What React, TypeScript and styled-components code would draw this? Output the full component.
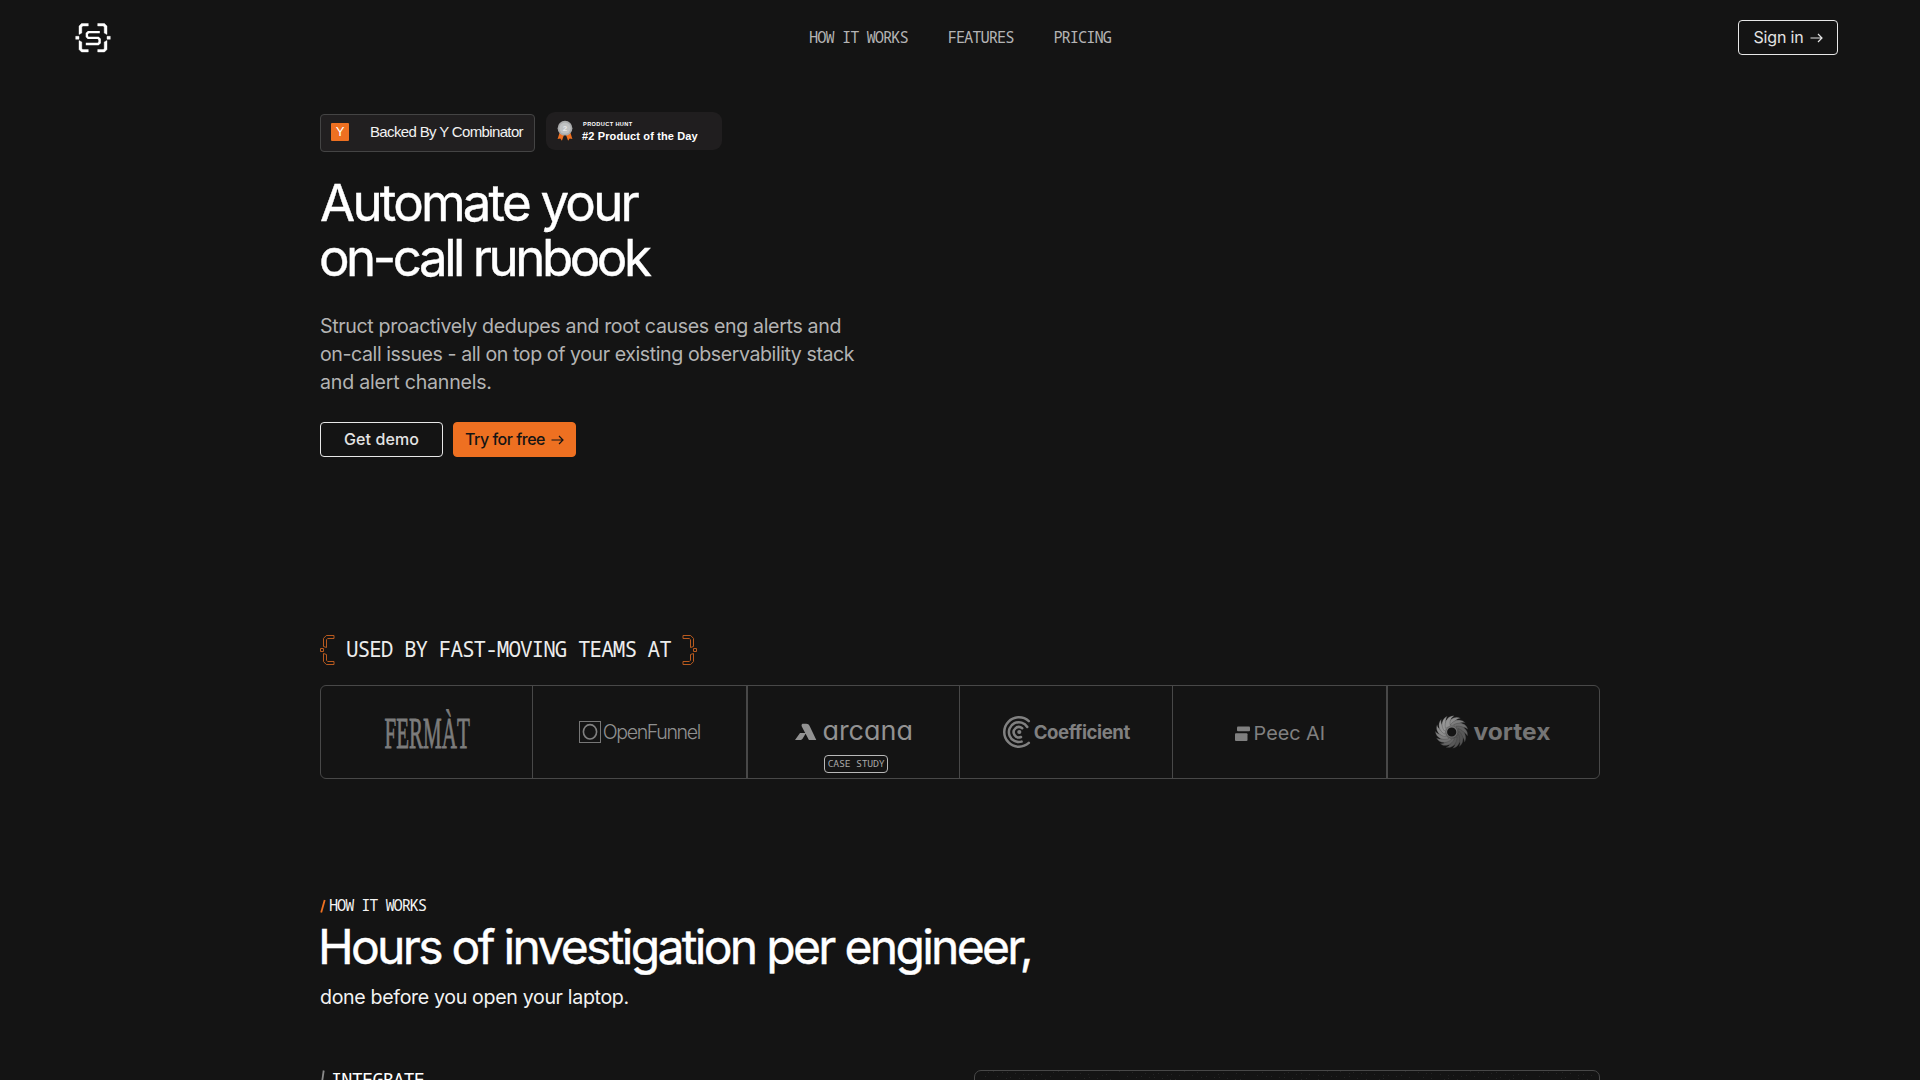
import React from 'react';
import styled, { createGlobalStyle } from 'styled-components';

const mono = '"Noto Sans Mono", "DejaVu Sans Mono", monospace';
const display = 'Inter, "Liberation Sans", sans-serif';

const GlobalStyle = createGlobalStyle`
  * { box-sizing: border-box; }
  body { margin: 0; background: #141414; color: #fff; overflow: hidden; }
  h1, h2, h3, p { margin: 0; font-weight: 400; }
  svg { display: block; flex: none; }
  a { color: inherit; text-decoration: none; }
`;

const Page = styled.div`
  height: 1080px;
  overflow: hidden;
  background: #141414;
`;

const Header = styled.header`
  display: grid;
  grid-template-columns: 1fr auto 1fr;
  align-items: center;
  height: 75px;
  padding: 0 82px 0 75px;
`;

const Nav = styled.nav`
  display: flex;
  gap: 40px;
  padding-left: 7px;
  font: 400 15.4px/20px ${mono};
  letter-spacing: -1.02px;
  color: #b4b4b4;
`;

const Button = styled.button<{ $variant?: 'outline' | 'primary'; $width: number; $weight?: number; $spacing?: number }>`
  display: flex;
  align-items: center;
  justify-content: center;
  gap: 6px;
  width: ${p => p.$width}px;
  height: 35px;
  padding: 0;
  border: 1px solid ${p => (p.$variant === 'primary' ? '#ee7021' : '#e8e8e8')};
  border-radius: 4px;
  background: ${p => (p.$variant === 'primary' ? '#ee7021' : 'transparent')};
  color: ${p => (p.$variant === 'primary' ? '#141414' : '#e4e4e4')};
  font: ${p => p.$weight ?? 500} 16px/33px ${display};
  letter-spacing: ${p => p.$spacing ?? 0}px;
`;

const SignInSlot = styled.div`
  justify-self: end;
`;

const Container = styled.main`
  width: 1280px;
  margin: 0 auto;
`;

const Badges = styled.div`
  display: flex;
  gap: 11px;
  padding-top: 37px;
`;

const YcBadge = styled.div`
  display: flex;
  align-items: center;
  gap: 21px;
  width: 215px;
  height: 38px;
  margin-top: 2px;
  padding: 0 0 2px 10px;
  border: 1px solid #444;
  border-radius: 4px;
  background: #211f20;
  font: 400 15px/20px "Liberation Sans", Arial, sans-serif;
  letter-spacing: -0.64px;
  white-space: nowrap;
  color: #f2f2f2;
`;

const YMark = styled.span`
  width: 18px;
  height: 18px;
  border-radius: 1px;
  background: #ee7021;
  color: #fff;
  font: 400 13px/18px "Liberation Sans", Arial, sans-serif;
  letter-spacing: 0;
  text-align: center;
`;

const HuntBadge = styled.div`
  display: flex;
  gap: 9px;
  width: 176px;
  height: 38px;
  padding: 8px 0 0 11px;
  border-radius: 9px;
  background: #201e1f;
  font-family: "Liberation Sans", Arial, sans-serif;
  font-weight: 700;
  white-space: nowrap;
`;

const HuntLabel = styled.div`
  padding: 1px 0 0 1px;
  font-size: 5.6px;
  line-height: 6px;
  letter-spacing: 0.4px;
`;

const HuntTitle = styled.div`
  margin-top: 2px;
  font-size: 11px;
  line-height: 14px;
  letter-spacing: 0.13px;
`;

const HeroTitle = styled.h1`
  padding-top: 23px;
  font: 400 51px/55px ${display};
  -webkit-text-stroke: 0.4px #fff;
`;

const Line = styled.span<{ $spacing: number; $shift?: number }>`
  display: block;
  margin-left: ${p => p.$shift ?? 0}px;
  letter-spacing: ${p => p.$spacing}px;
  white-space: nowrap;
`;

const Lead = styled.p`
  padding-top: 27px;
  font: 400 19.6px/28px ${display};
  color: #b3b3b3;
`;

const Actions = styled.div`
  display: flex;
  gap: 10px;
  padding-top: 26px;
`;

const UsedBy = styled.div`
  display: flex;
  gap: 11px;
  height: 30px;
  margin-top: 178px;
  font: 400 21px/28px ${mono};
  letter-spacing: -1px;
  color: #ececec;
`;

const Logos = styled.div`
  display: grid;
  grid-template-columns: 212px 215px 212px 213px 215px 211px;
  height: 94px;
  margin-top: 20px;
  border: 1px solid #484848;
  border-radius: 6px;
`;

const Cell = styled.div<{ $divider: number }>`
  border-right: ${p => p.$divider}px solid #484848;
  display: flex;
  flex-direction: column;
  align-items: center;
`;

const CaseStudy = styled.a`
  width: 64px;
  height: 18px;
  margin: -23px 0 0 5px;
  border: 1px solid #b8b8b8;
  border-radius: 4px;
  font: 400 9.8px/15px ${mono};
  letter-spacing: -0.22px;
  text-align: center;
  white-space: nowrap;
  color: #a8a8a8;
`;

const Eyebrow = styled.div`
  display: flex;
  gap: 3px;
  margin-top: 117px;
  font: 400 15.4px/20px ${mono};
  letter-spacing: -1.16px;
  color: #f4f4f4;
`;

const SectionTitle = styled.h2`
  padding-top: 3px;
  font: 400 48px/56px ${display};
  -webkit-text-stroke: 0.4px #fff;
`;

const SectionLead = styled.p`
  padding-top: 8px;
  font: 400 19.6px/28px ${display};
  color: #f2f2f2;
`;

const Steps = styled.div`
  display: grid;
  grid-template-columns: 1fr 626px;
  margin-top: 59px;
`;

const StepTitle = styled.h3`
  display: flex;
  gap: 6px;
  font: 400 18.6px/18px ${mono};
  letter-spacing: -0.8px;
`;

const Panel = styled.div`
  height: 200px;
  border: 1px solid #484848;
  border-radius: 7px;
  overflow: hidden;
`;

const Arrow = () => (
  <svg width="13" height="11" viewBox="0 0 13 11" fill="none" stroke="currentColor" strokeWidth="1.2">
    <path d="M.5 6H12M8 2L12 6L8 10" />
  </svg>
);

const StructLogo = () => (
  <svg width="36" height="32" viewBox="0 0 36 32" fill="#fff">
    <g stroke="#fff" strokeWidth=".4">
      <path d="M13.3 1.5H6.5L4 4v8.5L6.8 11V5l1-1h5.5zM.7 14.3H4v3H.7zM4 18.5L6.8 20v6.5l1 1h5.5V30H6.5L4 27.5z" />
      <path d="M22.7 1.5h6.8L32 4v8.5L29.2 11V5l-1-1h-5.5zM35.3 14.3H32v3h3.3zM32 18.5L29.2 20v6.5l-1 1h-5.5V30h6.8l2.5-2.5z" />
    </g>
    <path d="M24.8 10.1H13.4L11.9 11.6v3l1.3 1.3h10l1.4 1.4v3.4L23.2 22H10.8" fill="none" stroke="#fff" strokeWidth="2.4" />
  </svg>
);

const Brace = ({ flip }: { flip?: boolean }) => (
  <svg width="15" height="31" viewBox="0 0 15 31" fill="none" stroke="#b85a1f" strokeWidth="1">
    <g transform={flip ? 'translate(15 0) scale(-1 1)' : undefined}>
      <path d="M14 .5H6.3L3.5 3.4V11.5L6.5 12.5V4.7L7.7 3.5H14zM14 29.5H6.3L3.5 26.6V18.5L6.5 19.5V25.3L7.7 26.5H14zM.5 13.5h3v3h-3z" />
    </g>
  </svg>
);

const Medal = () => (
  <svg width="16" height="22" viewBox="0 0 16 22">
    <path d="M2.5 13L.6 19l2.7-.5 1.6 2.3L7 15zM13.5 13l1.9 6-2.7-.5-1.6 2.3L9 15z" fill="#ee7021" />
    <circle cx="8" cy="8.2" r="7.4" fill="#a9aaab" />
    <circle cx="8" cy="8.2" r="5.6" fill="#bfc1c2" />
    <text x="8" y="11" fontSize="8" fontFamily="Liberation Sans" fontWeight="700" fill="#e9eaeb" textAnchor="middle">2</text>
  </svg>
);

type WordProps = {
  x: number; y: number; size: number; width: number;
  weight?: number; fill?: string; family?: string; tight?: boolean; outline?: number; children: string;
};
const Word = ({ x, y, size, width, weight = 400, fill = '#808080', family = 'Inter', tight, outline = 0, children }: WordProps) => (
  <text
    x={x} y={y} textLength={width} lengthAdjust={tight ? 'spacing' : 'spacingAndGlyphs'}
    fontFamily={`${family}, sans-serif`} fontSize={size} fontWeight={weight} fill={fill}
    stroke={fill} strokeWidth={outline}
    style={{ fontFeatureSettings: children === 'arcana' ? '"cv11" 1' : 'normal' }}
  >
    {children}
  </text>
);

const Fermat = () => (
  <svg width="212" height="92" viewBox="321 686 212 92">
    <Word x={384.6} y={748} size={43.5} width={85.2} outline={0.9} fill="#7c7c7c" family="Liberation Serif">FERMÀT</Word>
  </svg>
);

const OpenFunnel = () => (
  <svg width="213" height="92" viewBox="533 686 213 92">
    <rect x="579.5" y="721.5" width="21" height="21" fill="none" stroke="#777" />
    <ellipse cx="590" cy="731.8" rx="6.6" ry="7.2" fill="none" stroke="#808080" strokeWidth="1.6" />
    <Word x={602.8} y={738.5} size={19.6} width={98.5} weight={300} fill="#909090" tight>OpenFunnel</Word>
  </svg>
);

const Arcana = () => (
  <svg width="211" height="92" viewBox="748 686 211 92" fill="#929292">
    <path d="M802.5 723.8h3.8c1.7 0 2.6.8 3.2 2L816.3 740h-7.4l-7-13.2c-.6-1.5-.4-2.4.6-3zM800 733h6l-3 5c-.8 1.4-1.5 2-3 2h-5z" />
    <Word x={822.4} y={740} size={26} width={90.5} fill="#929292">arcana</Word>
  </svg>
);

const Coefficient = () => (
  <svg width="212" height="92" viewBox="960 686 212 92">
    <g fill="none" stroke="#808080" strokeWidth="2.5" strokeLinecap="round">
      <path d="M1028.8 721.1A14.7 14.7 0 1 0 1028.8 742.9" />
      <path d="M1027.3 727A9.9 9.9 0 1 0 1021.6 741.6" />
      <path d="M1022.2 728.2A5.2 5.2 0 1 0 1021 737" />
    </g>
    <circle cx="1019.3" cy="732" r="2.1" fill="#808080" />
    <Word x={1033.8} y={738.7} size={18.6} width={96.4} weight={700} tight>Coefficient</Word>
  </svg>
);

const Peec = () => (
  <svg width="213" height="92" viewBox="1173 686 213 92" fill="#808080">
    <rect x="1237" y="726.5" width="13" height="4.8" rx="1" />
    <rect x="1235" y="733.3" width="12.5" height="7.7" rx="1" />
    <Word x={1253.6} y={740.3} size={19} width={71.5}>Peec AI</Word>
  </svg>
);

const blades = Array.from({ length: 15 }, (_, i) => i * 24);
const Vortex = () => (
  <svg width="211" height="92" viewBox="1388 686 211 92">
    <defs>
      <linearGradient id="swirl" gradientUnits="userSpaceOnUse" x1="1440" y1="718" x2="1463" y2="746">
        <stop offset="0" stopColor="#9a9a9a" />
        <stop offset="1" stopColor="#4a4a4a" />
      </linearGradient>
    </defs>
    <circle cx="1451.7" cy="732" r="8.8" fill="none" stroke="url(#swirl)" strokeWidth="8.4" />
    {blades.map(a => (
      <path
        key={a}
        d="M1447.5 726C1449 719 1455 715.5 1460.5 718.2C1456.5 718.8 1453.5 721.5 1453 726z"
        transform={`rotate(${a} 1451.7 732)`}
        fill={`rgb(${[0, 1, 2].map(() => Math.round(116 + 34 * Math.cos(((a + 50) * Math.PI) / 180))).join(',')})`}
        stroke="#333" strokeWidth=".25"
      />
    ))}
    <Word x={1473.5} y={739.5} size={24} width={77} weight={700} fill="#757575">vortex</Word>
  </svg>
);

const specks = Array.from({ length: 150 }, (_, i) => ({
  x: (i * 137.508 + (i % 7) * 23) % 620,
  y: (i * 5.77) % 9,
}));
const Specks = () => (
  <svg width="624" height="10" viewBox="0 0 624 10" fill="#242424">
    {specks.map((s, i) => <rect key={i} x={Math.round(s.x)} y={Math.round(s.y)} width="1" height="1" />)}
  </svg>
);

const Slash = ({ color, top, bottom, width }: { color: string; top: number; bottom: number; width: number }) => (
  <svg width={width} height={20} viewBox={`0 0 ${width} 20`}>
    <path d={`M1.2 ${bottom}L${width - 1.3} ${top}`} stroke={color} strokeWidth="1.8" />
  </svg>
);

export default function App() {
  return (
    <Page>
      <GlobalStyle />
      <Header>
        <StructLogo />
        <Nav>
          <a>HOW IT WORKS</a>
          <a>FEATURES</a>
          <a>PRICING</a>
        </Nav>
        <SignInSlot>
          <Button $width={100} $weight={400} $spacing={-0.15}>Sign in <Arrow /></Button>
        </SignInSlot>
      </Header>
      <Container>
        <Badges>
          <YcBadge><YMark>Y</YMark>Backed By Y Combinator</YcBadge>
          <HuntBadge>
            <Medal />
            <div>
              <HuntLabel>PRODUCT HUNT</HuntLabel>
              <HuntTitle>#2 Product of the Day</HuntTitle>
            </div>
          </HuntBadge>
        </Badges>
        <HeroTitle>
          <Line $spacing={-2.8}>Automate your</Line>
          <Line $spacing={-3.46} $shift={-1}>on-call runbook</Line>
        </HeroTitle>
        <Lead>
          <Line $spacing={-0.355}>Struct proactively dedupes and root causes eng alerts and</Line>
          <Line $spacing={-0.43}>on-call issues - all on top of your existing observability stack</Line>
          <Line $spacing={-0.22}>and alert channels.</Line>
        </Lead>
        <Actions>
          <Button $width={123} $spacing={0.1}>Get demo</Button>
          <Button $width={123} $variant="primary" $spacing={-0.5}>Try for free <Arrow /></Button>
        </Actions>
        <UsedBy>
          <Brace />
          USED BY FAST-MOVING TEAMS AT
          <Brace flip />
        </UsedBy>
        <Logos>
          <Cell $divider={1}><Fermat /></Cell>
          <Cell $divider={2}><OpenFunnel /></Cell>
          <Cell $divider={1}><Arcana /><CaseStudy>CASE STUDY</CaseStudy></Cell>
          <Cell $divider={1}><Coefficient /></Cell>
          <Cell $divider={2}><Peec /></Cell>
          <Cell $divider={0}><Vortex /></Cell>
        </Logos>
        <Eyebrow><Slash color="#ee7021" width={6} top={4} bottom={16.5} />HOW IT WORKS</Eyebrow>
        <SectionTitle><Line $spacing={-2.69} $shift={-2}>Hours of investigation per engineer,</Line></SectionTitle>
        <SectionLead><Line $spacing={-0.34}>done before you open your laptop.</Line></SectionLead>
        <Steps>
          <StepTitle><Slash color="#8a8a8a" width={5} top={0.5} bottom={18} />INTEGRATE</StepTitle>
          <Panel><Specks /></Panel>
        </Steps>
      </Container>
    </Page>
  );
}
